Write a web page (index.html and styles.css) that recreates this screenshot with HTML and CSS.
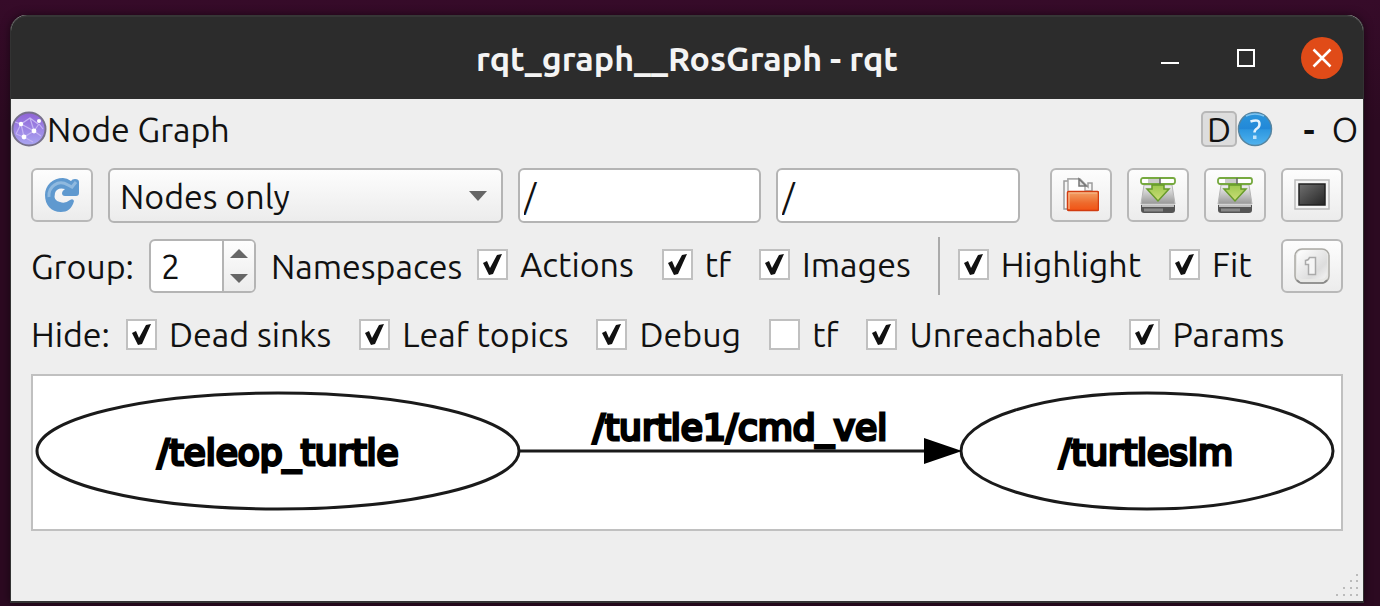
FILE: index.html
```html
<!DOCTYPE html>
<html lang="en">
<head>
  <meta charset="UTF-8">
  <meta name="viewport" content="width=device-width, initial-scale=1">
  <title>rqt_graph__RosGraph - rqt</title>
  <link rel="stylesheet" href="styles.css">
</head>
<body>
  <div class="window">
    <header class="titlebar">
      <h1>rqt_graph__RosGraph - rqt</h1>
      <div class="window-buttons">
        <button type="button" aria-label="Minimize">
          <svg width="42" height="42" viewBox="0 0 42 42"><path d="M12 26h18" stroke="#fff" stroke-width="2"/></svg>
        </button>
        <button type="button" aria-label="Maximize">
          <svg width="42" height="42" viewBox="0 0 42 42"><rect x="13" y="13" width="16" height="16" fill="none" stroke="#fff" stroke-width="2"/></svg>
        </button>
        <button type="button" class="close" aria-label="Close">
          <svg width="42" height="42" viewBox="0 0 42 42"><path d="M12.500 12.500l17 17M29.500 12.500l-17 17" stroke="#fff" stroke-width="2.500"/></svg>
        </button>
      </div>
    </header>

    <main>
      <div class="dock-title">
        <svg width="36" height="36" viewBox="0 0 36 36">
          <defs>
            <linearGradient id="globe" x2="0" y2="1"><stop offset="0" stop-color="#8f63d6"/><stop offset="1" stop-color="#aaa6f2"/></linearGradient>
          </defs>
          <circle cx="18" cy="18" r="16.500" fill="url(#globe)" stroke="#77718b" stroke-width="2"/>
          <path d="M4 11l6 2 9-6 8 6M10 13l-5 10M10 13l13 7 5-7M23 20l-10 6-8-3M23 20l7 5M13 26l9 5M19 7l4 13M10 13l3 13M28 13l4 5" fill="none" stroke="#c4b4f2" stroke-width="1.200"/>
          <g fill="#fff"><circle cx="10" cy="13" r="2.200"/><circle cx="28" cy="10" r="2"/><circle cx="23" cy="20" r="2.400"/><circle cx="13" cy="26" r="2.400"/></g>
        </svg>
        <h2>Node Graph</h2>
        <button type="button" class="dock-button pressed">D</button>
        <button type="button" class="dock-button" aria-label="Help">
          <svg width="36" height="36" viewBox="0 0 36 36">
            <defs>
              <linearGradient id="help" x2="0" y2="1"><stop offset="0" stop-color="#2b96dc"/><stop offset=".5" stop-color="#2288d8"/><stop offset=".52" stop-color="#2d97e0"/><stop offset="1" stop-color="#51b3ee"/></linearGradient>
            </defs>
            <circle cx="18" cy="18" r="16.500" fill="url(#help)" stroke="#56849f" stroke-width="1.500"/>
            <path d="M9 5Q18 1 27 5" fill="none" stroke="#7fc4f0" stroke-width="1.500"/>
            <path d="M13.500 10.500q9-3 9 2.500 0 3-2.500 4.500-2.500 1.500-2.500 4" fill="none" stroke="#e4f3fd" stroke-width="2.500"/>
            <rect x="16" y="24.500" width="3.500" height="3.500" fill="#bfe3fa"/>
          </svg>
        </button>
        <button type="button" class="dock-button float">-</button>
        <button type="button" class="dock-button">O</button>
      </div>

      <div class="row toolbar">
        <button type="button" class="tool" aria-label="Refresh">
          <svg width="36" height="36" viewBox="0 0 36 36">
            <path d="M30 24C28 32 23 35 17 35 7 35 1 28 1 18 1 8 9 1 19 1q4 0 8 3 1-2 4-2 4 0 4 3v11q0 3-3 3H21q-3 0-3-3 0-2 3-4-8-2-10 4-2 8 5 9 5 2 10-2 3-2 4 1z" fill="#5f99cf"/>
            <path d="M5 20C4 10 14 2 24 8l4 2 4-5" fill="none" stroke="#8fb9df" stroke-width="3"/>
          </svg>
        </button>
        <select class="graph-type" aria-label="Graph type">
          <option>Nodes only</option>
          <option>Nodes/Topics (active)</option>
          <option>Nodes/Topics (all)</option>
        </select>
        <input type="text" class="filter" value="/" aria-label="Node filter">
        <input type="text" class="filter" value="/" aria-label="Topic filter">
        <button type="button" class="tool spaced" aria-label="Load DOT">
          <svg width="36" height="36" viewBox="0 0 36 36">
            <defs>
              <linearGradient id="folder" x2="0" y2="1"><stop offset="0" stop-color="#f2a368"/><stop offset=".6" stop-color="#ee6a2c"/><stop offset="1" stop-color="#f25314"/></linearGradient>
            </defs>
            <path d="M1 32V4h4V2h12l8 8v-4h4v8H6v18z" fill="#f6f6f6" stroke="#9c9c9c" stroke-width="1.500"/>
            <path d="M5 14V2h11l6 7v6" fill="#fff" stroke="#aaa" stroke-width="1.500"/>
            <path d="M16 2v7h7z" fill="#ddd" stroke="#777" stroke-width="1.500"/>
            <rect x="4.500" y="14.500" width="31" height="19" rx="1" fill="url(#folder)" stroke="#d23c10" stroke-width="1.500"/>
            <path d="M6 32V16h28" fill="none" stroke="#f8bb90" stroke-width="1.200"/>
          </svg>
        </button>
        <button type="button" class="tool" aria-label="Save as DOT">
          <svg width="36" height="36" viewBox="0 0 36 36">
            <defs>
              <linearGradient id="drive" x2="0" y2="1"><stop offset="0" stop-color="#f2f2f2"/><stop offset="1" stop-color="#989898"/></linearGradient>
              <linearGradient id="arrow" x2="0" y2="1"><stop offset="0" stop-color="#9cc94e"/><stop offset="1" stop-color="#cddd79"/></linearGradient>
            </defs>
            <g id="save-icon">
              <path d="M4 8h28l3 19H1z" fill="url(#drive)" stroke="#b5b5b5"/>
              <path d="M1 28h34v5q0 3-3 3H4q-3 0-3-3z" fill="#555"/>
              <path d="M2 29h32" stroke="#e2e2e2" stroke-width="1.500"/>
              <path d="M4 33h19" stroke="#888" stroke-width="3"/>
              <rect x="1" y="1" width="34" height="6" rx="2" fill="#fff" stroke="#76a93f" stroke-width="1.800"/>
              <path d="M8 4h12" stroke="#ccc" stroke-width="4"/>
              <path d="M20 1v6" stroke="#666" stroke-width="1.500"/>
              <path d="M12 8h12v4h5L18 24 7 12h5z" fill="url(#arrow)" stroke="#679b2b" stroke-width="1.500"/>
            </g>
          </svg>
        </button>
        <button type="button" class="tool" aria-label="Save as image">
          <svg width="36" height="36" viewBox="0 0 36 36"><use href="#save-icon"/></svg>
        </button>
        <button type="button" class="tool" aria-label="Fullscreen">
          <svg width="36" height="36" viewBox="0 0 36 36">
            <defs>
              <linearGradient id="screen" x2="1" y2="1"><stop offset="0" stop-color="#707070"/><stop offset="1" stop-color="#252525"/></linearGradient>
            </defs>
            <rect x="1" y="3" width="34" height="29" fill="#f4f4f4" stroke="#bbb" stroke-width="1.500"/>
            <rect x="5" y="7" width="26" height="21" fill="url(#screen)" stroke="#222" stroke-width="1.500"/>
          </svg>
        </button>
      </div>

      <div class="row options">
        <label for="group">Group:</label>
        <div class="spinbox">
          <input type="number" id="group" value="2">
          <div class="steps">
            <button type="button" aria-label="Increase"><svg width="18" height="9" viewBox="0 0 18 9"><path d="M0 9L9 0l9 9z" fill="#666"/></svg></button>
            <button type="button" aria-label="Decrease"><svg width="18" height="9" viewBox="0 0 18 9"><path d="M0 0l9 9 9-9z" fill="#666"/></svg></button>
          </div>
        </div>
        <span>Namespaces</span>
        <div class="checks">
          <label class="check"><input type="checkbox" checked>Actions</label>
          <label class="check"><input type="checkbox" checked>tf</label>
          <label class="check"><input type="checkbox" checked>Images</label>
        </div>
        <div class="separator"></div>
        <div class="checks">
          <label class="check"><input type="checkbox" checked>Highlight</label>
          <label class="check"><input type="checkbox" checked>Fit</label>
        </div>
        <button type="button" class="tool last" aria-label="Fit in view">
          <svg width="36" height="36" viewBox="0 0 36 36">
            <defs>
              <linearGradient id="key" x2="1" y2="1"><stop offset="0" stop-color="#fff"/><stop offset=".7" stop-color="#ddd"/><stop offset="1" stop-color="#f4f4f4"/></linearGradient>
            </defs>
            <rect x="1" y="1" width="34" height="34" rx="7" fill="#e8e8e6" stroke="#aaa9a4" stroke-width="1.500"/>
            <rect x="3" y="2" width="30" height="29" rx="6" fill="url(#key)"/>
            <path d="M3 32q2 3 6 3h18q4 0 6-3" fill="none" stroke="#888" stroke-width="1.500"/>
            <path d="M11.500 12.500q3 0 4-3h6v17h-7v-10h-3z" fill="#f5f5f5" stroke="#aaa" stroke-width="1.500"/>
          </svg>
        </button>
      </div>

      <div class="row hide-options">
        <span>Hide:</span>
        <div class="checks">
          <label class="check"><input type="checkbox" checked>Dead sinks</label>
          <label class="check"><input type="checkbox" checked>Leaf topics</label>
          <label class="check"><input type="checkbox" checked>Debug</label>
          <label class="check"><input type="checkbox">tf</label>
          <label class="check"><input type="checkbox" checked>Unreachable</label>
          <label class="check"><input type="checkbox" checked>Params</label>
        </div>
      </div>

      <div class="graph">
        <svg viewBox="0 0 1308 153" role="img" aria-label="ROS node graph">
          <g class="shape">
            <ellipse cx="245" cy="75" rx="241" ry="58"/>
            <ellipse cx="1114" cy="75" rx="186" ry="58"/>
            <path d="M487 75H892"/>
          </g>
          <path d="M891 62l38 13-38 13z"/>
          <g class="names">
            <text x="245" y="89">/teleop_turtle</text>
            <text x="707" y="64">/turtle1/cmd_vel</text>
            <text x="1113" y="89">/turtlesim</text>
          </g>
        </svg>
      </div>

      <svg class="grip" width="24" height="24" viewBox="0 0 24 24">
        <path d="M1 22h2M8 22h2M15 22h2M21 22h2M8 15h2M15 15h2M21 15h2M15 8h2M21 8h2M21 2h2" stroke="#bbb" stroke-width="2"/>
      </svg>
    </main>
  </div>
</body>
</html>
```
FILE: styles.css
```css
* {
  box-sizing: border-box;
}

body {
  margin: 0;
  min-height: 100vh;
  padding: 15px 16px 3px 10px;
  display: flex;
  background: linear-gradient(#360b29, #2c0a21 20%, #2c0a21);
  font-family: Ubuntu, "Noto Sans", sans-serif;
  font-size: 34px;
  line-height: 36px;
  color: #111;
}

button,
input,
select {
  margin: 0;
  padding: 0;
  font: inherit;
  color: inherit;
}

svg {
  display: block;
}

.window {
  flex: 1;
  min-width: 0;
  display: flex;
  flex-direction: column;
  border: solid #333;
  border-width: 0 1px 2px;
  border-radius: 16px 16px 0 0;
  background: #eee;
  box-shadow: 0 0 8px rgba(0, 0, 0, 0.5);
}

/* Title bar */
.titlebar {
  display: grid;
  grid-template-columns: 1fr auto 1fr;
  align-items: center;
  height: 84px;
  padding: 0 20px;
  border-top: 2px solid #363636;
  border-radius: 16px 16px 0 0;
  background: #2c2c2c;
  color: #f4f4f4;
}

.titlebar h1 {
  grid-column: 2;
  margin: 0;
  font-size: 34px;
  font-weight: bold;
}

.window-buttons {
  display: flex;
  justify-content: flex-end;
  gap: 34px;
}

.window-buttons button {
  border: none;
  border-radius: 50%;
  background: none;
}

.window-buttons .close {
  background: #e04b18;
}

main {
  flex: 1;
  display: flex;
  flex-direction: column;
  padding-top: 12px;
}

/* Plugin header */
.dock-title {
  display: flex;
  align-items: center;
  height: 36px;
  margin-bottom: 21px;
}

.dock-title h2 {
  flex: 1;
  margin: 0;
  font-size: 34px;
  font-weight: normal;
}

.dock-button {
  width: 36px;
  height: 36px;
  border: none;
  background: none;
}

.dock-button.pressed {
  border: 2px solid #b8b8b8;
  border-radius: 5px;
  background: #ddd;
  line-height: 32px;
}

.dock-button.float {
  margin-left: 18px;
  font-weight: bold;
}

/* Toolbars */
.row {
  display: flex;
  align-items: center;
  padding: 0 20px;
}

.toolbar {
  align-items: flex-start;
  gap: 15px;
  margin-bottom: 14px;
}

.tool {
  display: flex;
  align-items: center;
  justify-content: center;
  flex: none;
  width: 62px;
  height: 54px;
  border: 2px solid #b8b8b8;
  border-radius: 6px;
  background: linear-gradient(#fdfdfd, #ececec);
}

.tool.spaced {
  margin-left: 15px;
}

.tool.last {
  margin-left: auto;
}

.graph-type,
.filter,
.spinbox {
  height: 55px;
  border: 2px solid #b4b4b4;
  border-radius: 6px;
}

.graph-type {
  flex: 21;
  min-width: 0;
  padding-left: 10px;
  appearance: none;
  line-height: 48px;
  background: url("data:image/svg+xml,%3Csvg xmlns='http://www.w3.org/2000/svg' width='18' height='10'%3E%3Cpath d='M0 0h18L9 10z' fill='%23666'/%3E%3C/svg%3E") no-repeat right 14px center, linear-gradient(#fdfdfd, #ececec);
}

.filter {
  flex: 13;
  min-width: 0;
  padding-left: 4px;
  background: #fff;
}

.options {
  gap: 15px;
  height: 58px;
  margin-bottom: 21px;
}

.options .checks {
  margin-bottom: 4px;
}

.spinbox {
  display: flex;
  width: 107px;
  height: 54px;
  overflow: hidden;
  background: #fff;
}

.spinbox input {
  flex: 1;
  min-width: 0;
  padding-left: 10px;
  border: none;
  background: none;
  appearance: textfield;
}

.spinbox input::-webkit-inner-spin-button {
  display: none;
}

.steps {
  display: flex;
  flex-direction: column;
  width: 32px;
  border-left: 2px solid #b4b4b4;
  background: linear-gradient(#fdfdfd, #ececec);
}

.steps button {
  display: flex;
  align-items: center;
  justify-content: center;
  flex: 1;
  border: none;
  background: none;
}

.checks {
  display: flex;
  gap: 28px;
}

.check {
  display: flex;
  align-items: center;
  gap: 12px;
}

.check input {
  width: 31px;
  height: 31px;
  border: 2px solid #c0c0c0;
  appearance: none;
  background: #fff;
}

.check input:checked {
  background: #fff url("data:image/svg+xml,%3Csvg xmlns='http://www.w3.org/2000/svg' width='27' height='27'%3E%3Cpath d='M4 12l4-2 3 7 7-13 5-1-9 20-4 1z' fill='%23111'/%3E%3C/svg%3E") no-repeat;
}

.separator {
  width: 2px;
  height: 58px;
  margin: 0 3px 0 12px;
  background: #aaa;
}

.hide-options {
  gap: 16px;
  margin-bottom: 22px;
}

/* Graph view */
.graph {
  margin: 0 20px 16px;
  border: 2px solid #c0c0c0;
  background: #fff;
}

.graph svg {
  width: 100%;
}

.shape {
  fill: none;
  stroke: #1a1a1a;
  stroke-width: 3px;
}

.names {
  font-family: "DejaVu Sans", sans-serif;
  font-size: 36px;
  text-anchor: middle;
  stroke: #000;
  stroke-width: 3px;
}

.grip {
  margin: auto 4px 4px auto;
}
```
